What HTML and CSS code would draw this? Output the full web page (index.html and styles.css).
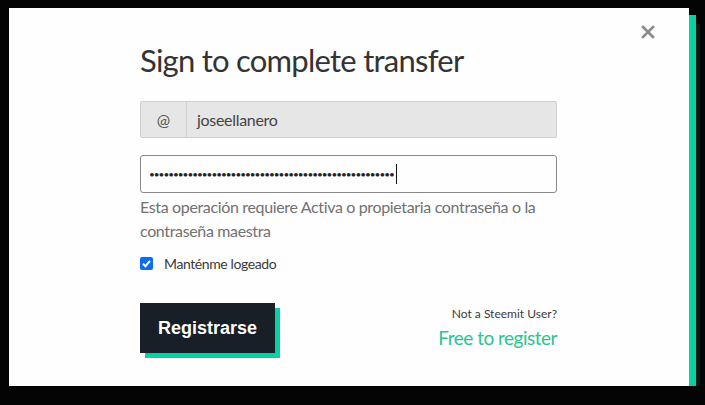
FILE: index.html
```html
<!DOCTYPE html>
<html lang="es">
<head>
<meta charset="utf-8">
<link rel="stylesheet" href="styles.css">
</head>
<body>
<div class="modal">
  <button class="close" aria-label="Close">
    <svg width="14" height="14" viewBox="0 0 14 14"><path d="M2 2 L12 12 M12 2 L2 12" stroke="#8a8a8a" stroke-width="2.6" stroke-linecap="square"/></svg>
  </button>
  <div class="content">
    <h1 class="title">Sign to complete transfer</h1>
    <div class="input-group">
      <span class="addon">@</span>
      <span class="username">joseellanero</span>
    </div>
    <div class="password">
      <span class="dots">•••••••••••••••••••••••••••••••••••••••••••••••••••</span><span class="caret"></span>
    </div>
    <p class="help">Esta operación requiere Activa o propietaria contraseña o la contraseña maestra</p>
    <label class="remember"><span class="check"><svg width="13" height="13" viewBox="0 0 13 13"><rect x="0" y="0" width="13" height="13" rx="2" fill="#0b6cf0"/><path d="M3 6.8 L5.4 9.2 L10 3.8" stroke="#fff" stroke-width="2" fill="none"/></svg></span>Manténme logeado</label>
    <div class="actions">
      <button class="primary">Registrarse</button>
      <div class="register">
        <div class="not-user">Not a Steemit User?</div>
        <a class="free" href="#">Free to register</a>
      </div>
    </div>
  </div>
</div>
</body>
</html>
```

FILE: styles.css
```css
html, body {
  margin: 0;
  padding: 0;
  background: #040404;
  font-family: Lato, "Open Sans", sans-serif;
}
.modal {
  position: relative;
  margin: 8px 0 0 9px;
  width: 680px;
  height: 378px;
  background: #fefefe;
  box-shadow: 7px 7px 0 #07d2a6, 11px 16px 0 #0b1a15;
}
.close {
  position: absolute;
  top: 17px;
  left: 632px;
  border: 0;
  background: none;
  padding: 0;
  width: 14px;
  height: 14px;
}
.content {
  margin-left: 131px;
  width: 417px;
  padding-top: 32px;
}
.title {
  margin: 0;
  font-weight: 400;
  font-size: 31px;
  line-height: 40px;
  letter-spacing: -0.75px;
  color: #333;
}
.input-group {
  display: flex;
  margin-top: 21px;
  height: 35px;
  border: 1px solid #cfcfcf;
  background: #e6e6e6;
  border-radius: 2px;
  font-size: 16px;
  color: #444;
}
.addon {
  width: 45px;
  border-right: 1px solid #cfcfcf;
  display: flex;
  align-items: center;
  justify-content: center;
  color: #555;
}
.username {
  display: flex;
  align-items: center;
  padding-left: 10px;
  letter-spacing: -0.3px;
}
.password {
  display: flex;
  align-items: center;
  margin-top: 17px;
  height: 36px;
  border: 1px solid #8a8a8a;
  border-radius: 3px;
  padding-left: 8px;
  font-size: 10px;
  letter-spacing: -1px;
  color: #222;
}
.caret {
  display: inline-block;
  width: 1px;
  height: 20px;
  background: #111;
  margin-left: 2px;
}
.help {
  margin: 2px 0 0;
  font-size: 16px;
  line-height: 24px;
  letter-spacing: -0.35px;
  color: #717171;
}
.remember {
  display: flex;
  align-items: center;
  margin-top: 12px;
  font-size: 14px;
  letter-spacing: -0.4px;
  color: #3a3a3a;
}
.check {
  display: flex;
  margin-right: 11px;
}
.actions {
  display: flex;
  justify-content: space-between;
  align-items: flex-start;
  margin-top: 31px;
}
.primary {
  width: 135px;
  height: 50px;
  border: 0;
  background: #191f26;
  color: #fff;
  font-family: "Liberation Sans", Arial, sans-serif;
  font-weight: 700;
  font-size: 18px;
  box-shadow: 5px 5px 0 #07d2a6;
  padding: 0;
}
.register {
  text-align: right;
  padding-top: 3px;
}
.not-user {
  font-size: 12px;
  color: #3a3a3a;
  line-height: 16px;
}
.free {
  display: block;
  margin-top: 4px;
  font-size: 19px;
  line-height: 24px;
  letter-spacing: -0.5px;
  color: #2bc48f;
  text-decoration: none;
}
```
